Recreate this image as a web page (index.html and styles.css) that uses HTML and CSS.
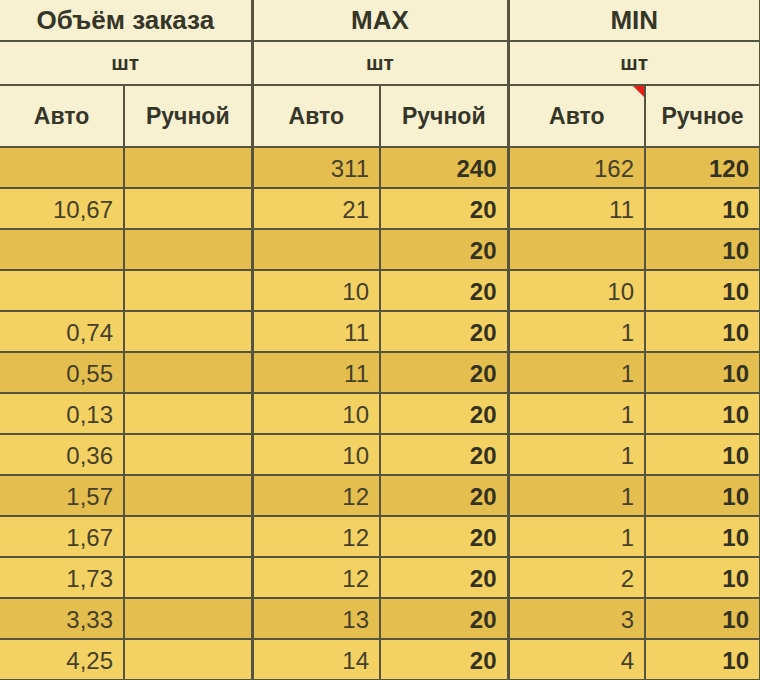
FILE: index.html
```html
<!DOCTYPE html>
<html lang="ru">
<head>
<meta charset="utf-8">
<title>Объём заказа</title>
<link rel="stylesheet" href="styles.css">
</head>
<body>
<table class="grid">
  <colgroup>
    <col class="c1"><col class="c2"><col class="c3"><col class="c4"><col class="c5"><col class="c6">
  </colgroup>
  <thead>
    <tr class="h1">
      <th colspan="2" class="sep">Объём заказа</th>
      <th colspan="2" class="sep">MAX</th>
      <th colspan="2">MIN</th>
    </tr>
    <tr class="h2">
      <th colspan="2" class="sep">шт</th>
      <th colspan="2" class="sep">шт</th>
      <th colspan="2">шт</th>
    </tr>
    <tr class="h3">
      <th>Авто</th>
      <th class="sep">Ручной</th>
      <th>Авто</th>
      <th class="sep">Ручной</th>
      <th class="note">Авто<span class="flag"></span></th>
      <th>Ручное</th>
    </tr>
  </thead>
  <tbody>
    <tr class="dark"><td></td><td class="sep"></td><td>311</td><td class="b sep">240</td><td>162</td><td class="b">120</td></tr>
    <tr><td>10,67</td><td class="sep"></td><td>21</td><td class="b sep">20</td><td>11</td><td class="b">10</td></tr>
    <tr class="dark"><td></td><td class="sep"></td><td></td><td class="b sep">20</td><td></td><td class="b">10</td></tr>
    <tr><td></td><td class="sep"></td><td>10</td><td class="b sep">20</td><td>10</td><td class="b">10</td></tr>
    <tr><td>0,74</td><td class="sep"></td><td>11</td><td class="b sep">20</td><td>1</td><td class="b">10</td></tr>
    <tr class="dark"><td>0,55</td><td class="sep"></td><td>11</td><td class="b sep">20</td><td>1</td><td class="b">10</td></tr>
    <tr><td>0,13</td><td class="sep"></td><td>10</td><td class="b sep">20</td><td>1</td><td class="b">10</td></tr>
    <tr><td>0,36</td><td class="sep"></td><td>10</td><td class="b sep">20</td><td>1</td><td class="b">10</td></tr>
    <tr class="dark"><td>1,57</td><td class="sep"></td><td>12</td><td class="b sep">20</td><td>1</td><td class="b">10</td></tr>
    <tr><td>1,67</td><td class="sep"></td><td>12</td><td class="b sep">20</td><td>1</td><td class="b">10</td></tr>
    <tr><td>1,73</td><td class="sep"></td><td>12</td><td class="b sep">20</td><td>2</td><td class="b">10</td></tr>
    <tr class="dark"><td>3,33</td><td class="sep"></td><td>13</td><td class="b sep">20</td><td>3</td><td class="b">10</td></tr>
    <tr><td>4,25</td><td class="sep"></td><td>14</td><td class="b sep">20</td><td>4</td><td class="b">10</td></tr>
  </tbody>
</table>
</body>
</html>
```
FILE: styles.css
```css
html, body {
  margin: 0;
  padding: 0;
  background: #f3d263;
}

.grid {
  border-collapse: collapse;
  table-layout: fixed;
  width: 760px;
  font-family: "Liberation Sans", Arial, sans-serif;
  color: #3a3828;
}

.c1 { width: 124px; }
.c2 { width: 128px; }
.c3 { width: 128px; }
.c4 { width: 128px; }
.c5 { width: 137px; }
.c6 { width: 115px; }

.grid th,
.grid td {
  border: 2px solid #55543e;
  padding: 0 10px;
  overflow: hidden;
  white-space: nowrap;
}

.grid th {
  background: #f8f1d1;
  font-weight: bold;
  font-size: 23px;
  text-align: center;
  color: #353528;
}

.grid tr > :first-child { border-left: none; }
.grid thead tr.h1 th { border-top: none; }

.grid .sep { border-right-width: 3px; }

.h1 { height: 41px; }
.h1 th { font-size: 26px; }
.h2 { height: 44px; }
.h2 th { font-size: 21px; }
.h3 { height: 62px; }

.note { position: relative; }
.flag {
  position: absolute;
  top: 0;
  right: 0;
  width: 0;
  height: 0;
  border-top: 11px solid #e3201a;
  border-left: 11px solid transparent;
}

.grid tbody tr { height: 41px; }

.grid td {
  background: #f3d263;
  font-size: 24px;
  text-align: right;
  color: #45402a;
  padding-top: 2px;
}

.grid tr.dark td { background: #e4bf50; }

.grid td.b {
  font-weight: bold;
  color: #33311f;
}
```
